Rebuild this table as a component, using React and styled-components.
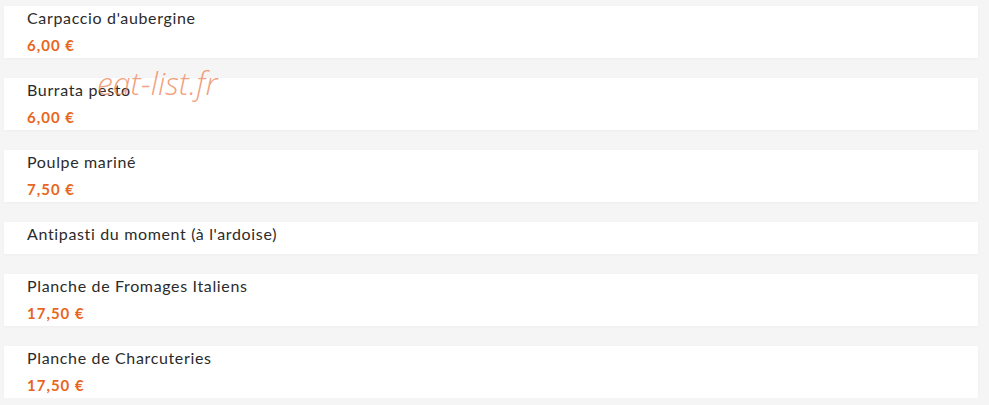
import React from 'react';
import styled, { createGlobalStyle } from 'styled-components';

const GlobalStyle = createGlobalStyle`
  body {
    margin: 0;
    background: #f5f5f5;
    font-family: "Lato", "Noto Sans", sans-serif;
  }
`;

const items = [
  { name: "Carpaccio d'aubergine", price: '6,00 €' },
  { name: 'Burrata pesto', price: '6,00 €' },
  { name: 'Poulpe mariné', price: '7,50 €' },
  { name: "Antipasti du moment (à l'ardoise)" },
  { name: 'Planche de Fromages Italiens', price: '17,50 €' },
  { name: 'Planche de Charcuteries', price: '17,50 €' },
];

export default function App() {
  return (
    <>
      <GlobalStyle />
      <Page>
        <List>
          {items.map((item) => (
            <Card key={item.name} $compact={!item.price}>
              <Name>{item.name}</Name>
              {item.price && <Price>{item.price}</Price>}
            </Card>
          ))}
        </List>
        <Watermark>eat-list.fr</Watermark>
      </Page>
    </>
  );
}

const Page = styled.div`
  position: relative;
  padding: 6px 11px 0 4px;
`;

const List = styled.div`
  display: flex;
  flex-direction: column;
  gap: 20px;
`;

const Card = styled.div`
  box-sizing: border-box;
  height: ${(p) => (p.$compact ? '32px' : '52px')};
  background: #fff;
  padding: 2px 22px 0 23px;
  box-shadow: 0 1px 3px rgba(0, 0, 0, 0.03);
`;

const Name = styled.div`
  font-size: 16px;
  line-height: 20px;
  color: #2b2b2b;
  letter-spacing: 0.65px;
`;

const Price = styled.div`
  margin-top: 7px;
  font-size: 15px;
  line-height: 20px;
  font-weight: 700;
  color: #e8661c;
  letter-spacing: 1px;
`;

const Watermark = styled.div`
  position: absolute;
  left: 97px;
  top: 61px;
  font-family: "Open Sans", sans-serif;
  font-style: italic;
  font-size: 32px;
  font-weight: 300;
  color: rgba(236, 120, 70, 0.7);
  pointer-events: none;
`;
